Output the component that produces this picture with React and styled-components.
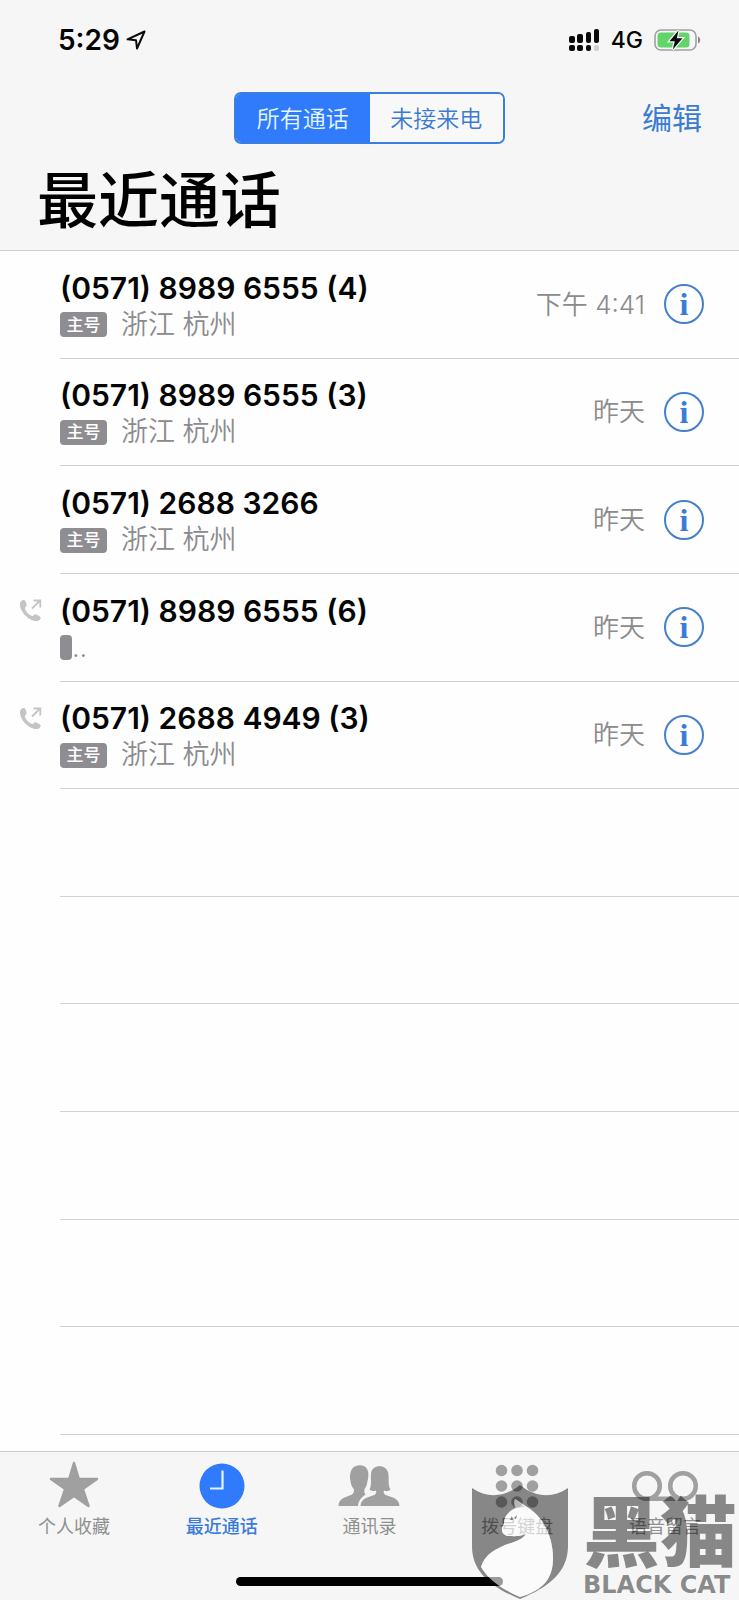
import React from 'react';
import styled, {createGlobalStyle} from 'styled-components';

const GlobalStyle = createGlobalStyle`
    *{
        box-sizing: border-box;
    }

    body{
        margin: 0;
        background-color: #fefefe;
        font-family: Inter, 'Noto Sans CJK SC', sans-serif;
    }

    button{
        font-family: inherit;
        cursor: pointer;
    }

    h1, ul{
        margin: 0;
        padding: 0;
    }
`;

const Page = styled.div`
    position: relative;
    display: flex;
    flex-direction: column;
    min-height: 100vh;
`;

const Header = styled.header`
    background-color: #f6f6f6;
    border-bottom: 1px solid #cfcfd1;
    padding-bottom: 10px;
`;

const StatusBar = styled.div`
    display: flex;
    justify-content: space-between;
    align-items: center;
    height: 80px;
    padding: 0 37px 0 58px;
    color: #050505;
`;

const Clock = styled.div`
    display: flex;
    align-items: center;
    gap: 6px;
    font-size: 28px;
    font-weight: 600;
`;

const Signals = styled.div`
    display: flex;
    align-items: center;
    gap: 11px;
    font-size: 23px;
    font-weight: 500;
`;

const Toolbar = styled.div`
    display: grid;
    grid-template-columns: 1fr 271px 1fr;
    align-items: center;
    height: 76px;
    padding: 0 37px;
`;

const Segments = styled.div`
    grid-column: 2;
    display: flex;
    height: 52px;
    border: 2px solid #3b7fdc;
    border-radius: 7px;
    overflow: hidden;
`;

const Segment = styled.button`
    flex: 1;
    padding: 0 0 2px;
    border: none;
    font-family: 'Noto Sans CJK SC', sans-serif;
    font-size: 23px;
    font-weight: 350;
    color: ${props => props.$active ? '#e4f7ff' : '#3b7bd0'};
    background-color: ${props => props.$active ? '#2f7bfc' : '#f8f8f9'};
`;

const EditButton = styled.button`
    justify-self: end;
    padding: 0;
    border: none;
    background: none;
    font-size: 30px;
    line-height: 40px;
    color: #3b7bd0;
`;

const Title = styled.h1`
    padding: 6px 37px 0;
    font-size: 61px;
    font-weight: 500;
    line-height: 78px;
    color: #000;
`;

const CallList = styled.ul`
    display: grid;
    grid-auto-rows: 1fr;
    flex: 1;
    padding-bottom: 16px;
    list-style: none;
`;

const CallRow = styled.li`
    display: flex;
    min-height: 96px;
`;

const Direction = styled.div`
    display: flex;
    justify-content: flex-end;
    width: 60px;
    padding: 25px 18px 0 0;
`;

const CallBody = styled.div`
    display: flex;
    flex: 1;
    justify-content: space-between;
    align-items: center;
    border-bottom: 1px solid #d2d2d4;
    padding-right: 35px;
`;

const Caller = styled.div`
    display: flex;
    flex-direction: column;
    gap: 1px;
    padding-top: 4px;
`;

const Number = styled.div`
    font-size: 30px;
    font-weight: 600;
    line-height: 36px;
    color: #050505;
`;

const Place = styled.div`
    display: flex;
    align-items: center;
    gap: 14px;
    height: 36px;
    font-size: 27px;
    font-weight: 350;
    line-height: 36px;
    color: #8b8b8d;
`;

const Badge = styled.span`
    display: flex;
    justify-content: center;
    align-items: center;
    width: 47px;
    height: 25px;
    border-radius: 4px;
    background-color: #8e8e92;
    font-size: 17px;
    font-weight: 500;
    line-height: 24px;
    color: #fff;
`;

const ClippedPlace = styled(Place)`
    gap: 0;
`;

const ClippedBadge = styled(Badge)`
    width: 12px;
`;

const CallMeta = styled.div`
    display: flex;
    align-items: center;
    gap: 19px;
    color: #8b8b8d;
`;

const CallTime = styled.span`
    padding-bottom: 4px;
    font-size: 26px;
    font-weight: 350;
`;

const InfoButton = styled.button`
    display: flex;
    justify-content: center;
    align-items: center;
    width: 40px;
    height: 40px;
    padding: 0;
    border: 2px solid #4580cc;
    border-radius: 50%;
    background: none;
    font-family: 'Liberation Serif', serif;
    font-size: 32px;
    font-weight: 700;
    line-height: 32px;
    color: #3b7bd8;
`;

const Footer = styled.footer`
    background-color: #f6f6f6;
    border-top: 1px solid #cdcdcf;
`;

const TabBar = styled.nav`
    display: flex;
    padding-top: 8px;
`;

const Tab = styled.a`
    display: flex;
    flex: 1;
    flex-direction: column;
    align-items: center;
    font-size: 18px;
    font-weight: ${props => props.$active ? 500 : 400};
    line-height: 30px;
    text-decoration: none;
    color: ${props => props.$active ? '#3b7bd8' : '#8f8f8f'};

    svg{
        display: block;
        height: 52px;
    }
`;

const HomeBar = styled.div`
    width: 36%;
    height: 9px;
    margin: 35px auto 14px;
    border-radius: 5px;
    background-color: #000;
`;

const Watermark = styled.div`
    position: absolute;
    right: 2px;
    bottom: 0;
    display: flex;
    align-items: flex-end;
    gap: 14px;
    color: rgba(0, 0, 0, 0.45);
    pointer-events: none;
`;

const Brand = styled.div`
    display: flex;
    flex-direction: column;
    padding-bottom: 2px;
`;

const BrandName = styled.span`
    padding-bottom: 4px;
    font-family: 'Noto Sans CJK SC', sans-serif;
    font-size: 77px;
    font-weight: 900;
    line-height: 80px;
`;

const BrandLatin = styled.span`
    font-family: 'DejaVu Sans', sans-serif;
    font-size: 24px;
    font-weight: 700;
    line-height: 26px;
`;

const calls = [
    {id: 1, number: '(0571) 8989 6555 (4)', place: '浙江 杭州', time: '下午 4:41'},
    {id: 2, number: '(0571) 8989 6555 (3)', place: '浙江 杭州', time: '昨天'},
    {id: 3, number: '(0571) 2688 3266', place: '浙江 杭州', time: '昨天'},
    {id: 4, number: '(0571) 8989 6555 (6)', place: '', time: '昨天', outgoing: true},
    {id: 5, number: '(0571) 2688 4949 (3)', place: '浙江 杭州', time: '昨天', outgoing: true}
];

const emptyRows = [6, 7, 8, 9, 10, 11];

const LocationIcon = ()=>(
    <svg width="20" height="20" viewBox="0 0 20 20" fill="none" stroke="#0a0a0a" strokeWidth="2" strokeLinejoin="round">
        <path d="M18.5 1.5L1.5 9.3L10 10.2L11 18.5Z"/>
    </svg>
);

const SignalIcon = ()=>(
    <svg width="31" height="23" viewBox="0 0 31 23" fill="#0a0a0a">
        <rect x="0" y="7" width="6" height="7" rx="2"/>
        <rect x="8" y="5" width="6" height="9" rx="2"/>
        <rect x="17" y="3" width="5" height="11" rx="2"/>
        <rect x="25" y="0" width="5" height="14" rx="2"/>
        <rect x="0" y="16" width="6" height="6" rx="2"/>
        <rect x="8" y="16" width="6" height="6" rx="2"/>
        <rect x="17" y="16" width="5" height="6" rx="2"/>
        <rect x="25" y="16" width="5" height="6" rx="2" fill="#cfcfcf"/>
    </svg>
);

const BatteryIcon = ()=>(
    <svg width="48" height="24" viewBox="0 0 48 24">
        <rect x="1" y="2" width="41" height="20" rx="6" fill="none" stroke="#a0a0a0" strokeWidth="1.6"/>
        <rect x="3.5" y="4.5" width="32" height="15" rx="3.5" fill="#63d46c"/>
        <path d="M44 8.5C47 9.5 47 14.5 44 15.5Z" fill="#8c8c8c"/>
        <path d="M24.5 2.5L15.5 13.2H20.8L18.8 21.5L28.5 10.3H22.8Z" fill="#0a0a0a" stroke="#f6f6f6" strokeWidth="2.5" paintOrder="stroke"/>
    </svg>
);

const OutgoingIcon = ()=>(
    <svg width="23" height="23" viewBox="0 0 23 23">
        <path d="M1.2 3.5C2 1.5 4.5 .3 5.7 1.3C6.8 2.5 7.5 5 7.6 6.4C7.6 7.7 5.6 8.2 5.8 9.3C6.5 12.5 10 16 13.2 16.9C14.5 17.1 15.2 15 16.5 15.2C18.2 15.5 20.5 17 21.5 18.2C22.2 19.5 20.5 21.5 18.5 22C14.5 22.7 8.5 19.5 4.5 14.5C1.5 10.7 .4 6.5 1.2 3.5Z" fill="#c4c4c6"/>
        <path d="M13 9.5L21 1.7M14.5 1.5H21.3V8.5" fill="none" stroke="#c4c4c6" strokeWidth="1.8"/>
    </svg>
);

const StarIcon = ()=>(
    <svg width="50" height="52" viewBox="0 0 50 52">
        <path d="M25 3L29.8 19H48L33.8 29L39.5 46L25 36L10.5 46L16.2 29L2 19H20.2Z" fill="#a0a0a0" stroke="#a0a0a0" strokeWidth="2.5" strokeLinejoin="round"/>
    </svg>
);

const RecentsIcon = ()=>(
    <svg width="50" height="52" viewBox="0 0 50 52">
        <circle cx="25" cy="26" r="22.5" fill="#2f7bfc"/>
        <path d="M25.5 10.5V28.5H13" fill="none" stroke="#e4f3ff" strokeWidth="2.2"/>
    </svg>
);

const ContactsIcon = ()=>(
    <svg width="62" height="52" viewBox="0 0 62 52" fill="#a0a0a0">
        <path d="M.5 46C1 38 7 37.5 13 35C16 33.5 16.5 31 15.5 28.5C13.5 26.5 13 24 12.5 21C11.5 18 12 12 14 9C17 4 27 4 29 9C31 12 30.5 18 29.5 21C29 24 28.5 26.5 26.8 28.5C26 31 26 33 27.5 34.5C24 37 20.5 40 20 46Z"/>
        <path d="M22.5 46C23 38.5 29 37.5 35 35.5C38 34.5 38.5 33 38 30.5C36 31.5 33 31 31.5 29.5C34 25 32.5 19 33 14C33.5 4 47.5 4 50 12C51.5 18 49.5 25 52.5 29.5C50.5 31.5 48 31.5 46 30.5C45 33 46 34.5 49 35.5C55 37.5 61 38.5 61.5 46Z" stroke="#f6f6f6" strokeWidth="3" paintOrder="stroke"/>
    </svg>
);

const KeypadIcon = ()=>(
    <svg width="50" height="52" viewBox="0 0 50 52" fill="#a0a0a0">
        {[9.5, 25, 40.5].map(x=>[10.5, 26, 42].map(y=><circle key={`${x}-${y}`} cx={x} cy={y} r="5.8"/>))}
    </svg>
);

const VoicemailIcon = ()=>(
    <svg width="68" height="52" viewBox="0 0 68 52" fill="none" stroke="#a0a0a0" strokeWidth="4.5">
        <circle cx="16" cy="26" r="12.8"/>
        <circle cx="52" cy="26" r="12.8"/>
        <path d="M16 38.8H52"/>
    </svg>
);

const catOutline = 'M44 19L56 27C73 37 82 58 82 78C82 98 73 110 49 117C30 109 17 99 10 87C14 73 28 67 43 62C49 60 53 57 55 54C48 57 42 56 36 56C31 54 29 50 33 44C33 36 38 31 45 28C43 25 43 22 44 19Z';

const CatShield = ()=>(
    <svg width="98" height="120" viewBox="0 0 98 120">
        <path d={`M1 8C17 19 34 17 49 5C64 17 81 19 97 8V66C97 92 78 107 49 119C20 107 1 92 1 66Z${catOutline}`} fill="#000" fillOpacity="0.45" fillRule="evenodd"/>
        <path d={catOutline} fill="#fff" fillOpacity="0.6"/>
        <path d="M44 19L54 27L45 28C43 25 43 22 44 19Z" fill="#000" fillOpacity="0.15"/>
        <path d="M39 40L41 36L42 40ZM43 38L46 35L45 39Z" fill="#777"/>
    </svg>
);

const tabs = [
    {label: '个人收藏', Icon: StarIcon},
    {label: '最近通话', Icon: RecentsIcon, active: true},
    {label: '通讯录', Icon: ContactsIcon},
    {label: '拨号键盘', Icon: KeypadIcon},
    {label: '语音留言', Icon: VoicemailIcon}
];

const Call = ({call})=>(
    <CallRow>
        <Direction>{call.outgoing && <OutgoingIcon/>}</Direction>
        <CallBody>
            <Caller>
                <Number>{call.number}</Number>
                {
                    call.place === '' ?
                    <ClippedPlace><ClippedBadge/>..</ClippedPlace> :
                    <Place><Badge>主号</Badge>{call.place}</Place>
                }
            </Caller>
            <CallMeta>
                <CallTime>{call.time}</CallTime>
                <InfoButton>i</InfoButton>
            </CallMeta>
        </CallBody>
    </CallRow>
);

const App = ()=>(
    <Page>
        <GlobalStyle/>
        <Header>
            <StatusBar>
                <Clock>5:29<LocationIcon/></Clock>
                <Signals><SignalIcon/>4G<BatteryIcon/></Signals>
            </StatusBar>
            <Toolbar>
                <Segments>
                    <Segment $active>所有通话</Segment>
                    <Segment>未接来电</Segment>
                </Segments>
                <EditButton>编辑</EditButton>
            </Toolbar>
            <Title>最近通话</Title>
        </Header>
        <CallList>
            {calls.map(call=><Call key={call.id} call={call}/>)}
            {emptyRows.map(id=><CallRow key={id}><Direction/><CallBody/></CallRow>)}
        </CallList>
        <Footer>
            <TabBar>
                {tabs.map(({label, Icon, active})=>(
                    <Tab key={label} href="#" $active={active}><Icon/>{label}</Tab>
                ))}
            </TabBar>
            <HomeBar/>
        </Footer>
        <Watermark>
            <CatShield/>
            <Brand>
                <BrandName>黑猫</BrandName>
                <BrandLatin>BLACK CAT</BrandLatin>
            </Brand>
        </Watermark>
    </Page>
);

export default App;
